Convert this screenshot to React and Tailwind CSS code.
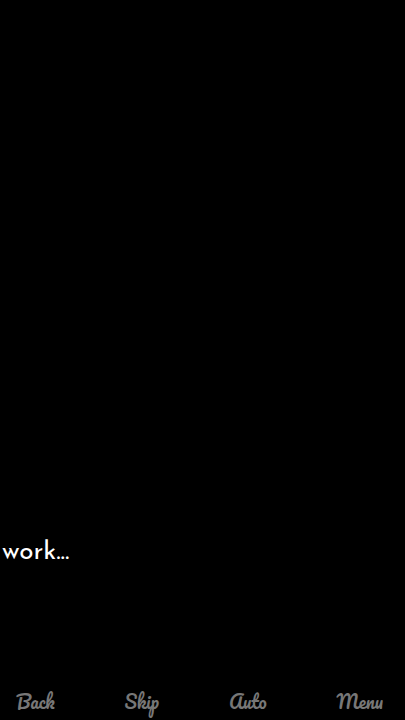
const actions = ['Back', 'Skip', 'Auto', 'Menu'];

export default function App() {
  return (
    <main className="flex min-h-screen flex-col justify-end overflow-hidden bg-black">
      <section className="h-[147px] px-[2px]">
        <p className="font-['Josefin_Sans','Lato',sans-serif] text-[26px] leading-8 text-white">work...</p>
      </section>

      <nav className="flex items-center justify-between pr-[22px] pl-4" aria-label="Game controls">
        {actions.map((action) => (
          <button
            key={action}
            type="button"
            className="cursor-pointer font-['Pacifico','Liberation_Serif',cursive] text-lg leading-9 text-[#777777] hover:text-white"
          >
            {action}
          </button>
        ))}
      </nav>
    </main>
  );
}
